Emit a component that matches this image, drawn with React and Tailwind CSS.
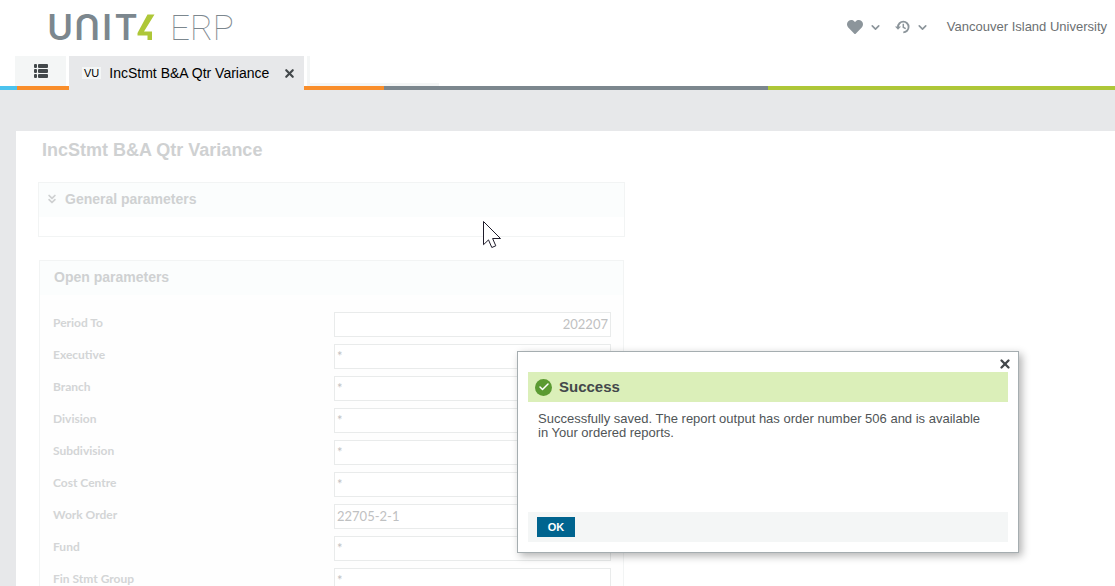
import { FaHeart } from "react-icons/fa";
import { ChevronDown, ChevronsDown, X, Check } from "lucide-react";

const parameters = [
  { id: "period", label: "Period To", value: "202207", right: true },
  { id: "executive", label: "Executive", value: "*" },
  { id: "branch", label: "Branch", value: "*" },
  { id: "division", label: "Division", value: "*" },
  { id: "subdivision", label: "Subdivision", value: "*" },
  { id: "cost-centre", label: "Cost Centre", value: "*" },
  { id: "work-order", label: "Work Order", value: "22705-2-1" },
  { id: "fund", label: "Fund", value: "*" },
  { id: "stmt-group", label: "Fin Stmt Group", value: "*" },
];

// the N of the wordmark is a U turned upside down
const Logo = () => (
  <svg width="190" height="50" viewBox="0 0 190 50" role="img" aria-label="UNIT4 ERP">
    <g fontSize="35" textAnchor="middle" className="fill-[#7c878e] font-['Inter',sans-serif] font-semibold">
      <text x="12" y="36">U</text>
      <text x="39" y="36" transform="rotate(180 39 23)">U</text>
      <text x="59" y="36">I</text>
      <text x="78" y="36">T</text>
    </g>
    <path d="M99.500 10.500h7L96 27.500h8V36h-4.500v-4.500H89.500V29z" fill="#aec738" />
    <text x="122" y="36" fontSize="35" className="fill-[#7c878e] font-['Roboto',sans-serif] font-thin">
      ERP
    </text>
  </svg>
);

const ListIcon = () => (
  <svg width="14" height="14" viewBox="0 0 14 14" fill="#43484b" aria-hidden="true">
    {[0, 5, 10].map((y) => (
      <g key={y}>
        <rect x="0" y={y} width="3" height="4" rx="1" />
        <rect x="4" y={y} width="10" height="4" rx="1" />
      </g>
    ))}
  </svg>
);

const HistoryIcon = () => (
  <svg width="15" height="14" viewBox="0 0 15 14" fill="none" stroke="currentColor" aria-hidden="true">
    <path d="M3 7a5.300 5.300 0 1 1 5.300 5.300" strokeWidth="1.800" />
    <path d="M8.300 3.800V7.300l2.400 1.400" strokeWidth="1.500" />
    <path d="M0 6.500h6L3 9.800z" fill="currentColor" stroke="none" />
  </svg>
);

const Header = () => (
  <header className="bg-white">
    <div className="flex h-14 items-start justify-between pl-12 pr-2">
      <div className="pt-1">
        <Logo />
      </div>
      <div className="flex items-center pt-[17px] text-[#8c959b]">
        <button type="button" aria-label="Favourites" className="flex items-center gap-[6px]">
          <FaHeart size={16} />
          <ChevronDown size={13} strokeWidth={3} />
        </button>
        <button type="button" aria-label="History" className="ml-[13px] flex items-center gap-[6px]">
          <HistoryIcon />
          <ChevronDown size={13} strokeWidth={3} />
        </button>
        <a href="#" className="ml-[18px] text-[13px] leading-5 text-[#6c7072]">
          Vancouver Island University
        </a>
      </div>
    </div>
    <nav className="relative z-10 flex h-[30px] pl-[15px]">
      <button type="button" aria-label="Menu" className="flex w-[51px] items-center justify-center bg-[#f4f6f6]">
        <ListIcon />
      </button>
      <div className="-mb-1 ml-[3px] flex w-[235px] items-center bg-[#e7e8ea] pl-[13px] pr-2 text-black">
        <span className="bg-[#f4f6f6] px-[2px] text-[11px] leading-3">VU</span>
        <span className="ml-2 flex-1 text-sm leading-8">IncStmt B&amp;A Qtr Variance</span>
        <button type="button" aria-label="Close tab" className="text-[#43484b]">
          <X size={13} strokeWidth={4} />
        </button>
      </div>
      <div className="ml-[3px] w-[132px] border-b-3 border-l-3 border-[#f4f6f6]" />
    </nav>
    <div className="flex h-1">
      <div className="w-[17px] bg-[#4cc3ee]" />
      <div className="w-[367px] bg-[#f98e2b]" />
      <div className="w-96 bg-[#7c878e]" />
      <div className="flex-1 bg-[#aec738]" />
    </div>
  </header>
);

const ParameterRow = ({ id, label, value, right }) => (
  <div className="flex h-8 items-start">
    <label htmlFor={id} className="w-[281px] pt-[3px] font-['Lato',sans-serif] text-xs leading-4 font-bold text-[#d3d5d6]">
      {label}
    </label>
    <input
      id={id}
      defaultValue={value}
      className={`h-[25px] min-w-0 flex-1 border border-[#e9ebeb] bg-white px-[2px] pb-[2px] font-['Lato',sans-serif] text-[13px] text-[#bfc1c2] outline-none ${
        right ? "text-right" : "text-left"
      }`}
    />
  </div>
);

const SuccessDialog = () => (
  <div
    role="dialog"
    aria-labelledby="dialog-title"
    className="absolute left-[517px] top-[351px] z-20 flex w-[502px] flex-col border border-[#a5adb0] bg-white px-[10px] pb-[10px] shadow-[3px_3px_8px_rgba(0,0,0,0.3)]"
  >
    <div className="flex h-5 items-end justify-end">
      <button type="button" aria-label="Close" className="-mr-1 pb-px text-[#43484b]">
        <X size={14} strokeWidth={4} />
      </button>
    </div>
    <div className="flex h-[30px] items-center gap-[7px] bg-[#dbefb9] pl-[7px]">
      <span className="flex size-[17px] items-center justify-center rounded-full bg-[#5b9a32] text-white">
        <Check size={12} strokeWidth={3} />
      </span>
      <h2 id="dialog-title" className="text-[15px] font-bold text-[#43484b]">
        Success
      </h2>
    </div>
    <p className="h-[110px] pt-[10px] pr-5 pl-[10px] text-[13px] leading-[14px] text-[#505557]">
      Successfully saved. The report output has order number 506 and is available in Your ordered reports.
    </p>
    <div className="flex h-[30px] items-center bg-[#f4f6f6] pl-[9px]">
      <button type="button" className="h-5 w-[38px] bg-[#00648f] text-[11px] font-bold text-white">
        OK
      </button>
    </div>
  </div>
);

const Cursor = () => (
  <svg className="absolute left-[483px] top-[221px] z-20" width="19" height="28" viewBox="0 0 19 28" aria-hidden="true">
    <path
      d="M.5.5v23.2l5-4.8 3.3 7.6 4-1.7-3.2-7.3h7.9z"
      fill="#fff"
      stroke="#1f1c2b"
      strokeWidth="1"
    />
  </svg>
);

const App = () => {
  return (
    <div className="relative flex h-screen flex-col overflow-hidden bg-[#e7e8ea] font-['Liberation_Sans',sans-serif]">
      <Header />
      <main className="mt-[41px] ml-4 flex-1 bg-white pl-[22px]">
        <h1 className="pl-1 pt-[7px] text-lg leading-6 font-bold text-[#cfd1d2]">IncStmt B&amp;A Qtr Variance</h1>
        <section className="mt-5 h-[55px] w-[587px] max-w-full border border-[#f2f4f4]">
          <h2 className="h-[34px] bg-[#fbfdfd] pl-[6px] text-sm leading-8 font-bold text-[#cfd1d2]">
            <button type="button" className="flex items-center gap-[6px]">
              <ChevronsDown size={14} strokeWidth={3} />
              General parameters
            </button>
          </h2>
        </section>
        <section className="mt-[23px] ml-px w-[585px] max-w-full border border-[#f2f4f4] bg-[#fefefe]">
          <h2 className="h-[34px] bg-[#fbfdfd] pl-[14px] text-sm leading-8 font-bold text-[#cfd1d2]">Open parameters</h2>
          <form className="pt-[17px] pr-3 pl-[13px]">
            {parameters.map((item) => (
              <ParameterRow key={item.id} {...item} />
            ))}
          </form>
        </section>
      </main>
      <Cursor />
      <SuccessDialog />
    </div>
  );
};

export default App;
